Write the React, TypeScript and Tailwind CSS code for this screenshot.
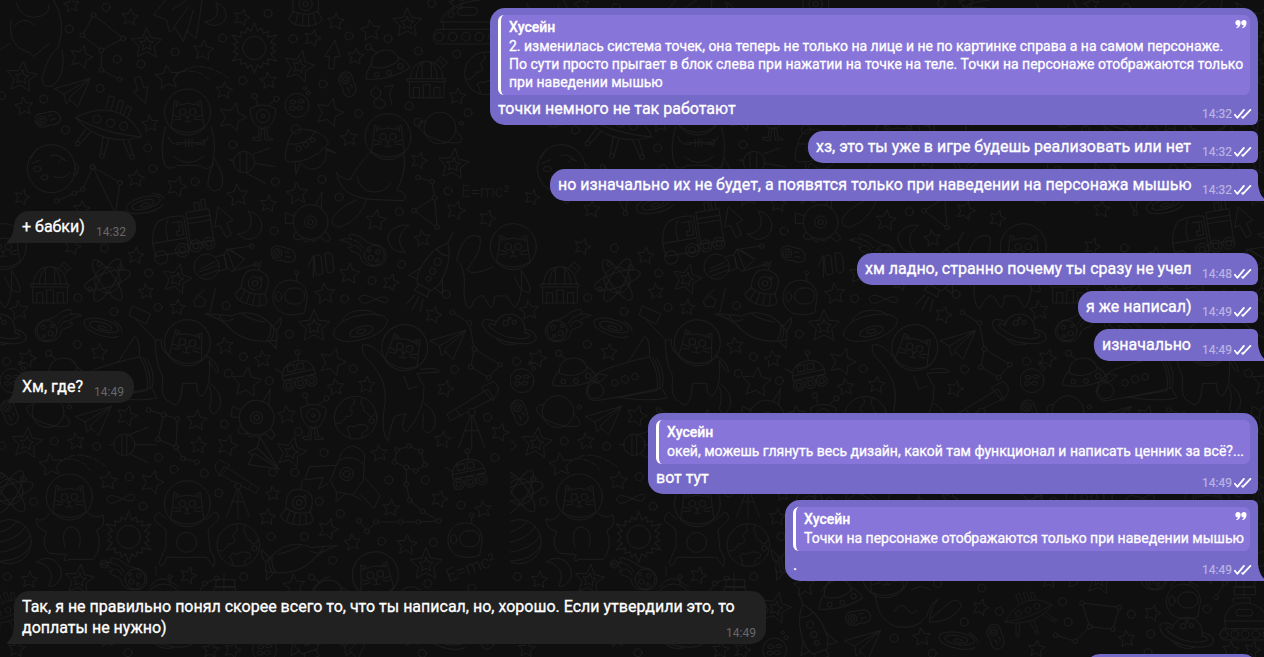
import clsx from "clsx";
import { ReactNode } from "react";

interface BubbleProps {
  time: string;
  className?: string;
  isOwn?: boolean;
  isLast?: boolean; // last message of a group has a tail
  children?: ReactNode;
}

interface QuoteProps {
  author: string;
  hasIcon?: boolean;
  children: ReactNode;
}

// [x, y, radius], wallpaper units
const STARS = [
  [215, 15, 24], [390, 52, 26], [243, 172, 36], [72, 320, 28], [610, 152, 32],
  [725, 53, 26], [503, 233, 38], [672, 272, 26], [697, 352, 44], [450, 372, 26],
  [408, 536, 26], [530, 560, 32], [713, 587, 34], [805, 612, 26], [66, 592, 24],
  [805, 243, 26], [1007, 65, 26], [937, 115, 26], [1112, 92, 32], [1067, 170, 26],
  [988, 338, 44], [1047, 414, 26], [1372, 290, 26], [1257, 482, 26], [892, 582, 34],
  [1128, 662, 32], [1367, 632, 30], [1267, 716, 26], [1048, 822, 32], [1172, 848, 26],
  [975, 882, 32], [407, 768, 26], [217, 740, 26], [438, 875, 24], [245, 628, 26],
  [1462, 656, 26], [57, 932, 30], [532, 923, 24], [1300, 945, 26], [675, 1038, 26],
  [297, 1057, 26], [82, 1075, 28], [788, 1078, 26], [740, 1148, 46], [997, 1086, 42],
  [1007, 1162, 26], [1100, 1155, 26], [1335, 1167, 26], [860, 1245, 28], [590, 1262, 32],
  [380, 1248, 32], [228, 1325, 26], [596, 1337, 26], [682, 1337, 32], [1138, 1360, 26],
  [1328, 1320, 26], [1500, 1298, 28], [152, 1395, 36], [325, 1443, 28], [456, 1447, 36],
  [818, 1482, 22], [802, 1552, 26], [984, 1588, 32], [1057, 1628, 26], [1173, 1525, 26],
  [1318, 1497, 26], [1450, 1528, 26], [1220, 1635, 32], [565, 1727, 26], [883, 1758, 34],
  [88, 1740, 26], [1412, 1823, 26], [1235, 1912, 28], [50, 1947, 26], [397, 1839, 26],
  [320, 1917, 26], [632, 1950, 26], [697, 1950, 26], [1370, 10, 24],
];

const BIG_STARS = [
  [440, 132, 48], [65, 232, 48], [897, 200, 48], [1222, 70, 46], [1360, 494, 48],
  [530, 838, 46], [942, 980, 50], [80, 1330, 48], [873, 1357, 48], [1278, 1694, 50],
  [238, 1740, 46], [797, 1825, 48],
];

const DOTS = [
  [318, 22], [208, 87], [351, 178], [525, 156], [423, 192], [300, 265], [131, 297],
  [197, 390], [443, 444], [459, 506], [585, 545], [699, 434], [826, 545], [728, 242],
  [668, 114], [804, 40], [879, 116], [1047, 108], [1164, 116], [1255, 153], [1370, 162],
  [969, 252], [1076, 340], [1227, 318], [1254, 367], [1404, 338], [966, 538], [1017, 592],
  [1198, 635], [1344, 573], [822, 693], [446, 819], [313, 744], [1205, 793], [1116, 842],
  [1338, 883], [1295, 10], [233, 893], [5, 287], [342, 935], [474, 922], [679, 917],
  [1034, 896], [232, 1033], [868, 1002], [730, 1070], [685, 1120], [808, 1142], [20, 1084],
  [1060, 1106], [1364, 1108], [673, 1272], [895, 1295], [163, 1323], [290, 1339],
  [476, 1372], [522, 1408], [613, 1420], [388, 1430], [818, 1417], [884, 1417],
  [972, 1358], [1167, 1440], [1276, 1440], [1383, 1515], [101, 1505], [429, 1519],
  [656, 1479], [958, 1504], [1021, 1541], [813, 1610], [913, 1610], [998, 1681],
  [1145, 1624], [1300, 1627], [313, 1692], [731, 1730], [1283, 1751], [22, 1730],
  [1463, 1252], [1485, 1373], [5, 1337], [1415, 1764], [1363, 1866], [128, 1805],
  [144, 1866], [1468, 1834], [1152, 1915], [334, 1843], [561, 1827], [392, 1902],
  [1267, 1960], [384, 1958],
];

const starPath = (x: number, y: number, r: number, turn: number) => {
  const points = Array.from({ length: 10 }, (_, i) => {
    const radius = i % 2 ? r * 0.48 : r;
    const angle = (i * Math.PI) / 5 - Math.PI / 2 + turn;
    return `${(x + radius * Math.cos(angle)).toFixed(1)} ${(y + radius * Math.sin(angle)).toFixed(1)}`;
  });
  return `M${points.join("L")}Z`;
};

const Chain = ({ points }: { points: number[][] }) => (
  <>
    <path d={`M${points.map((p) => p.join(" ")).join("L")}`} />
    {points.map(([x, y], i) => (
      <circle key={i} cx={x} cy={y} r="7" fill="#0f0f0f" />
    ))}
  </>
);

const CatHead = ({ x, y, turn = 0 }: { x: number; y: number; turn?: number }) => (
  <g transform={`translate(${x} ${y}) rotate(${turn})`}>
    <circle r="69" />
    <path d="M-50 46Q-44 10 -42 -12L-40 -34Q-28 -32 -20 -22Q0 -30 20 -22Q28 -32 40 -34L42 -12Q44 10 50 46" />
    <path d="M-34 -16L-34 -26L-25 -20M34 -16L34 -26L25 -20" />
    <circle cx="-15" cy="0" r="10" />
    <circle cx="15" cy="0" r="10" />
    <path d="M-5 13H5L0 19ZM0 19V27M-10 28Q-4 34 0 27Q4 34 10 28M-20 16L-42 10M-20 22L-40 24M20 16L42 10M20 22L40 24" />
    <path d="M-50 46Q0 78 50 46" />
  </g>
);

const Sun = ({ x, y }: { x: number; y: number }) => (
  <g transform={`translate(${x} ${y})`}>
    <circle r="35" />
    {Array.from({ length: 18 }, (_, i) => (
      <path
        key={i}
        d={i % 3 ? "M-9 -51L0 -64L9 -51" : "M-9 -51L0 -78L9 -51"}
        transform={`rotate(${i * 20})`}
      />
    ))}
  </g>
);

const Plane = ({ x, y, turn = 0 }: { x: number; y: number; turn?: number }) => (
  <path
    transform={`translate(${x} ${y}) rotate(${turn})`}
    d="M55 -45L-53 -14L-24 2L55 -45L17 42L-10 15L55 -45M-24 2L-18 32L-4 20"
  />
);

const Galaxy = ({ x, y, turn }: { x: number; y: number; turn: number }) => (
  <g transform={`translate(${x} ${y}) rotate(${turn})`}>
    <path d="M52 18C20 36 -58 22 -58 -4C-58 -30 46 -28 48 -2C48 20 -40 18 -40 -2C-38 -18 28 -16 28 0C26 12 -18 8 -14 0Q0 -7 12 1" />
    <path d="M60 2C56 -10 44 -20 30 -25" />
  </g>
);

const Comet = ({ x, y, flip = false }: { x: number; y: number; flip?: boolean }) => (
  <g transform={`translate(${x} ${y})${flip ? " scale(-1 1)" : ""}`}>
    <path d="M-18 -28Q-40 -20 -41 6Q-36 36 -2 35Q30 32 36 10Q34 0 52 -6Q68 -8 72 -22Q60 -20 62 -28Q76 -40 100 -44Q80 -52 62 -46Q76 -56 66 -62Q40 -58 30 -48Q16 -34 -18 -28Z" />
    <circle cx="-5" cy="2" r="30" />
    <circle cx="-16" cy="-8" r="7" />
    <circle cx="6" cy="10" r="8" />
    <circle cx="-14" cy="18" r="5" />
    <circle cx="10" cy="-12" r="5" />
    <path d="M34 -10Q40 -26 56 -28M28 -20Q40 -40 58 -44" />
  </g>
);

const Saturn = ({ x, y }: { x: number; y: number }) => (
  <g transform={`translate(${x} ${y}) rotate(14)`}>
    <path d="M-46 -4A46 46 0 0 1 46 -4M-30 34Q0 52 30 34" />
    <path d="M-46 -16Q-86 -22 -84 -2Q-70 32 0 34Q76 32 84 4Q82 -16 46 -16" />
    <path d="M-46 -6Q-66 -10 -64 0Q-40 18 0 20Q50 18 64 2Q62 -8 46 -6" />
    <circle cx="-16" cy="-20" r="8" />
    <circle cx="8" cy="-28" r="6" />
    <circle cx="-8" cy="-36" r="4" />
  </g>
);

const RingedPlanet = ({ x, y }: { x: number; y: number }) => (
  <g transform={`translate(${x} ${y})`}>
    <circle r="48" />
    <path d="M-44 -22Q-70 -20 -62 0C-40 36 40 52 62 42Q72 30 50 10" />
    <circle cx="64" cy="-14" r="6" />
  </g>
);

const Asteroid = ({ x, y, turn }: { x: number; y: number; turn: number }) => (
  <g transform={`translate(${x} ${y}) rotate(${turn})`}>
    <path d="M-36 -8Q-30 -30 -6 -22Q10 -20 26 -16Q44 -4 36 16Q24 28 0 18Q-34 24 -36 -8Z" />
    <circle cx="-16" cy="-2" r="13" />
    <circle cx="-16" cy="-2" r="6" />
    <path d="M6 -6Q12 -12 18 -6M8 8Q16 2 24 8" />
  </g>
);

const Crater = ({ x, y }: { x: number; y: number }) => (
  <g transform={`translate(${x} ${y})`}>
    <circle r="36" />
    <ellipse cx="-12" cy="-10" rx="9" ry="6" />
    <ellipse cx="12" cy="-12" rx="9" ry="5" />
    <ellipse cx="-14" cy="9" rx="9" ry="6" />
    <ellipse cx="8" cy="8" rx="9" ry="6" />
    <circle cx="24" cy="-52" r="5" />
    <circle cx="34" cy="-37" r="6" />
  </g>
);

const Earth = ({ x, y }: { x: number; y: number }) => (
  <g transform={`translate(${x} ${y})`}>
    <circle r="64" />
    <path d="M-60 16Q-46 22 -40 10Q-30 8 -30 -4Q-12 0 -10 -16Q-24 -30 -8 -38Q0 -44 -6 -58M20 -58Q10 -40 24 -32Q20 -16 36 -14Q40 2 54 -6L60 -18" />
    <path d="M-26 34Q-20 20 -6 28Q10 16 24 22Q44 24 34 38Q20 40 18 56M-26 34Q-18 44 -16 60" />
    <circle cx="48" cy="10" r="8" />
  </g>
);

const Alien = ({ x, y }: { x: number; y: number }) => (
  <g transform={`translate(${x} ${y})`}>
    <path d="M-38 -22Q0 -44 38 -22Q40 10 16 34Q0 44 -16 34Q-40 10 -38 -22Z" />
    <circle r="20" />
    <circle r="5" />
    <path d="M-10 32Q0 44 8 32M-12 40L-14 64H-32Q-34 74 -8 74L-4 42M12 40L14 64Q32 66 30 72H6L4 42" />
    <path d="M-16 -34L-22 -52M18 -34L34 -46" />
    <circle cx="-25" cy="-60" r="8" />
    <circle cx="40" cy="-51" r="8" />
  </g>
);

const Observatory = ({ x, y }: { x: number; y: number }) => (
  <g transform={`translate(${x} ${y})`}>
    <path d="M-50 -6Q-46 -58 0 -58Q46 -58 50 -6M-32 -6Q-30 -50 -8 -56M-14 -6V-54M14 -6V-54M32 -6Q30 -50 8 -56" />
    <rect x="-57" y="-6" width="114" height="9" />
    <path d="M-52 3V51H52V3M-40 51V20H-22V51M-10 51V12H10V51M22 51V20H40V51M24 -52L42 -72L62 -54L46 -38M34 -64L52 -46" />
  </g>
);

const Saucer = ({ x, y, turn = 0 }: { x: number; y: number; turn?: number }) => (
  <g transform={`translate(${x} ${y}) rotate(${turn})`}>
    <path d="M-42 0Q-40 -38 0 -40Q40 -38 42 0Q0 24 -42 0Z" />
    <path d="M-42 -8Q-62 8 -68 32Q0 54 68 32Q62 8 42 -8M-16 -38L-30 -54" />
    <circle cx="-36" cy="-60" r="9" />
    <circle cx="-34" cy="26" r="7" />
    <circle cx="4" cy="30" r="7" />
    <circle cx="42" cy="20" r="8" />
  </g>
);

const LegShip = ({ x, y, turn }: { x: number; y: number; turn: number }) => (
  <g transform={`translate(${x} ${y}) rotate(${turn})`}>
    <path d="M-104 0Q-50 -52 6 -50Q60 -50 104 0Q50 32 0 32Q-50 32 -104 0ZM-104 0Q0 22 104 0" />
    <circle cx="-40" cy="-14" r="12" />
    <circle cx="2" cy="-14" r="12" />
    <circle cx="42" cy="-16" r="12" />
    <path d="M-64 22L-80 66M-48 28L-68 70M-8 32L-2 82M10 32L10 82M52 26L84 66M68 20L94 60M-24 -54V-92H-8V-54M8 -54V-88H22V-52M32 -48L36 -78L50 -74L46 -44" />
    <circle cx="-76" cy="72" r="7" />
    <circle cx="4" cy="88" r="7" />
    <circle cx="92" cy="66" r="7" />
  </g>
);

const PodShip = ({ x, y, turn = 0 }: { x: number; y: number; turn?: number }) => (
  <g transform={`translate(${x} ${y}) rotate(${turn})`}>
    <circle r="52" />
    <circle r="18" />
    <circle r="8" />
    <path d="M-50 -18L-76 -28V4L-52 4M14 -50L34 -90L32 -40M-44 30Q-60 44 -44 52Q-30 56 -26 46Q-16 70 0 52Q14 68 26 44L50 60L60 48L44 28" />
  </g>
);

const Rover = ({ x, y }: { x: number; y: number }) => (
  <g transform={`translate(${x} ${y}) rotate(-12)`}>
    <path d="M-50 14Q-50 -34 0 -36Q50 -34 50 14ZM-48 0H48M-30 -8V-26H-8V-8ZM0 -8V-26H20V-8ZM8 -36V-54M-46 -8L-66 -26" />
    <circle cx="10" cy="-60" r="7" />
    <circle cx="-36" cy="32" r="16" />
    <circle cx="0" cy="32" r="16" />
    <circle cx="34" cy="32" r="16" />
    <circle cx="-36" cy="32" r="8" />
    <circle cx="0" cy="32" r="8" />
    <circle cx="34" cy="32" r="8" />
  </g>
);

const DomeAlien = ({ x, y, turn = 0 }: { x: number; y: number; turn?: number }) => (
  <g transform={`translate(${x} ${y}) rotate(${turn})`}>
    <path d="M-36 22Q-50 -44 0 -44Q50 -44 36 22M-36 18Q0 36 36 18L50 42Q40 62 0 62Q-40 62 -50 42ZM-24 26L-30 56M-8 30L-10 62M8 30L10 62M24 26L30 56M0 -44V-74" />
    <circle cy="-4" r="20" />
    <circle cy="-4" r="8" />
    <circle cx="14" cy="-24" r="4" />
  </g>
);

const Helmet = ({ x, y }: { x: number; y: number }) => (
  <g transform={`translate(${x} ${y})`}>
    <path d="M-36 42Q-56 20 -50 -8Q-40 -46 0 -48Q46 -46 52 0L44 50Q10 62 -20 52Z" />
    <rect x="-16" y="-24" width="60" height="48" rx="24" />
    <ellipse cx="-34" cy="2" rx="9" ry="14" />
    <path d="M20 -46V-64" />
    <circle cx="20" cy="-70" r="6" />
  </g>
);

const Telescope = ({ x, y, flip = false }: { x: number; y: number; flip?: boolean }) => (
  <g transform={`translate(${x} ${y})${flip ? " scale(-1 1)" : ""}`}>
    <path d="M-74 8L-64 26L66 -42L50 -68ZM-46 -6L-34 12M30 -74L64 -92Q86 -80 78 -56L64 -34ZM-4 12L-40 108M0 12V114M4 12L40 108M-22 56H22" />
    <circle r="11" fill="#0f0f0f" />
  </g>
);

const Rocket = ({ x, y, turn }: { x: number; y: number; turn: number }) => (
  <g transform={`translate(${x} ${y}) rotate(${turn})`}>
    <path d="M0 -92Q-40 -50 -36 30L-24 58H24L36 30Q40 -50 0 -92ZM0 -92V-130M-22 -60Q0 -48 22 -60M-36 10L-58 50L-28 46M36 10L58 50L28 46M-18 58L-22 80H22L18 58M-14 92L-24 130M0 92V136M14 92L24 130" />
    <circle cy="-28" r="11" />
    <circle cy="4" r="9" />
    <circle cy="30" r="7" />
  </g>
);

const Shuttle = ({ x, y }: { x: number; y: number }) => (
  <g transform={`translate(${x} ${y})`}>
    <path d="M-116 42Q-110 0 -60 -22Q0 -44 74 -60Q104 -10 96 42L-84 72Q-116 72 -116 42ZM10 -44Q30 -76 58 -120Q74 -122 74 -60M-20 62L110 34L126 64Q80 76 -20 62M84 -58Q112 -10 104 36M96 -54Q122 -12 112 30M-104 12L-80 -8L-52 -4L-74 14Z" />
    <circle cx="-30" cy="18" r="10" />
    <circle cx="0" cy="8" r="11" />
    <circle cx="30" cy="0" r="10" />
    <circle cx="-88" cy="42" r="24" />
  </g>
);

const Truck = ({ x, y }: { x: number; y: number }) => (
  <g transform={`translate(${x} ${y}) rotate(-9)`}>
    <path d="M-86 56Q-100 -10 -64 -46Q-30 -58 14 -50V56ZM-92 16H10M-44 16Q-50 -30 -34 -46M-24 -36H6V4L-14 6V-8H-4V-34M22 -60H92V36H22ZM22 -40H92M22 -26H92M50 -60V-84H64V-60M72 -60V-90H84V-60" />
    <circle cx="-72" cy="62" r="20" />
    <circle cx="-6" cy="50" r="20" />
    <circle cx="36" cy="44" r="18" />
    <circle cx="76" cy="42" r="18" />
    <circle cx="-6" cy="50" r="10" />
    <circle cx="36" cy="44" r="9" />
    <circle cx="76" cy="42" r="9" />
  </g>
);

const Atom = ({ x, y }: { x: number; y: number }) => (
  <g transform={`translate(${x} ${y})`}>
    <circle r="39" />
    <ellipse rx="72" ry="22" transform="rotate(-18)" />
    <ellipse rx="72" ry="22" transform="rotate(55)" />
    <ellipse rx="72" ry="22" transform="rotate(120)" />
    <circle cx="40" cy="-38" r="8" />
    <circle cx="-52" cy="28" r="7" />
    <circle cx="-24" cy="-48" r="7" />
  </g>
);

const SpacePlane = ({ x, y, flip = false }: { x: number; y: number; flip?: boolean }) => (
  <g transform={`translate(${x} ${y})${flip ? " scale(-1 1)" : ""} rotate(14)`}>
    <path d="M-128 -8Q-80 -18 -50 -20Q-20 -48 30 -42Q70 -30 92 -10L100 16Q20 52 -40 20Q-70 -4 -128 -8ZM-86 -14Q-70 12 -44 -12M-20 -34Q0 -24 50 -26M78 -20L96 -52Q104 -30 92 -10M78 26L104 42L96 14M70 -24Q80 0 72 26M80 -18Q90 0 82 20" />
  </g>
);

const Wallpaper = () => (
  <svg
    className="absolute inset-0 h-full w-full"
    fill="none"
    stroke="#1c1c1c"
    strokeWidth="3"
    strokeLinecap="round"
    strokeLinejoin="round"
    aria-hidden
  >
    <defs>
      <pattern
        id="space"
        width="510"
        height="657"
        patternUnits="userSpaceOnUse"
        viewBox="0 0 1530 1971"
      >
        {STARS.map(([x, y, r], i) => (
          <path key={i} d={starPath(x, y, r, (i % 3) * 0.2 - 0.1)} />
        ))}
        {BIG_STARS.map(([x, y, r], i) => (
          <path
            key={i}
            d={starPath(x, y, r, (i % 3) * 0.12) + starPath(x, y, r * 0.45, (i % 3) * 0.12)}
          />
        ))}
        {DOTS.map(([x, y]) => (
          <circle key={`${x}-${y}`} cx={x} cy={y} r="12" />
        ))}

        <Chain points={[[370, 115], [281, 45], [247, 106], [304, 151], [370, 115]]} />
        <Chain points={[[304, 151], [304, 210], [359, 238]]} />
        <Chain points={[[170, 603], [223, 580], [248, 568], [278, 501], [360, 548], [346, 640], [278, 501]]} />
        <Chain points={[[1254, 532], [1296, 545], [1304, 593], [1242, 632], [1311, 682], [1304, 593]]} />
        <Chain points={[[1357, 937], [1408, 969], [1423, 1047], [1412, 1101], [1466, 1133], [1500, 1094], [1423, 1047]]} />
        <Chain points={[[446, 1230], [491, 1244], [532, 1257], [528, 1341], [474, 1318], [491, 1244]]} />
        <Chain points={[[528, 1341], [549, 1376], [591, 1386]]} />
        <Chain points={[[1219, 1453], [1219, 1402], [1183, 1386], [1191, 1350], [1227, 1338], [1262, 1354], [1275, 1394], [1247, 1413], [1219, 1402]]} />
        <Chain points={[[1219, 1453], [1229, 1501], [1268, 1534], [1317, 1563], [1255, 1566], [1201, 1566], [1128, 1566], [1101, 1594], [1077, 1562]]} />
        <Chain points={[[107, 1905], [166, 1924], [209, 1880], [186, 1809], [298, 1822], [279, 1888], [209, 1880]]} />
        <Chain points={[[588, 1792], [614, 1750], [650, 1735]]} />

        <Sun x={763} y={144} />
        <Sun x={386} y={1611} />
        <Plane x={216} y={280} />
        <Plane x={279} y={1264} />
        <Plane x={780} y={1366} turn={75} />
        <Plane x={1342} y={1036} />
        <Plane x={1057} y={1936} />
        <Galaxy x={435} y={613} turn={-18} />
        <Galaxy x={308} y={981} turn={12} />
        <Galaxy x={1345} y={1920} turn={6} />
        <Comet x={146} y={990} />
        <Comet x={1118} y={764} flip />
        <Comet x={400} y={1735} flip />
        <Saturn x={500} y={1902} />
        <Saturn x={-2} y={992} />
        <Saturn x={1528} y={992} />
        <RingedPlanet x={1320} y={384} />
        <RingedPlanet x={144} y={1235} />
        <Asteroid x={142} y={358} turn={-20} />
        <Asteroid x={1042} y={252} turn={60} />
        <Asteroid x={848} y={763} turn={5} />
        <Asteroid x={28} y={1236} turn={60} />
        <Asteroid x={1043} y={1853} turn={-20} />
        <Asteroid x={1456} y={1909} turn={60} />
        <Crater x={891} y={316} />
        <Crater x={36} y={1142} />
        <Crater x={794} y={1950} />
        <Earth x={1067} y={1253} />
        <Earth x={715} y={1635} />
        <Earth x={1458} y={220} />
        <Alien x={789} y={348} />
        <Alien x={940} y={1246} />
        <Observatory x={1280} y={242} />
        <Observatory x={150} y={858} />
        <Saucer x={1156} y={190} turn={-15} />
        <Saucer x={190} y={1114} turn={-8} />
        <Saucer x={985} y={1780} turn={-15} />
        <LegShip x={326} y={382} turn={16} />
        <g transform="translate(1556 1840) scale(.72)">
          <LegShip x={0} y={0} turn={-20} />
        </g>
        <g transform="translate(26 1840) scale(.72)">
          <LegShip x={0} y={0} turn={-20} />
        </g>
        <PodShip x={932} y={666} />
        <PodShip x={770} y={1253} turn={5} />
        <Rover x={895} y={1118} />
        <Rover x={1405} y={1414} />
        <DomeAlien x={764} y={854} turn={15} />
        <DomeAlien x={917} y={16} />
        <DomeAlien x={897} y={1512} turn={8} />
        <Helmet x={870} y={888} />
        <Helmet x={1395} y={1616} />
        <Helmet x={490} y={1800} />
        <Telescope x={1415} y={1236} />
        <g transform="translate(714 1458) scale(.85)">
          <Telescope x={0} y={0} flip />
        </g>
        <Rocket x={1300} y={810} turn={28} />
        <Rocket x={910} y={1900} turn={-20} />
        <Shuttle x={345} y={1130} />
        <Truck x={545} y={700} />
        <Atom x={322} y={840} />
        <Atom x={30} y={1475} />
        <SpacePlane x={738} y={980} />
        <SpacePlane x={890} y={1675} flip />

        {/* cat hugging a fish bone */}
        <CatHead x={563} y={336} />
        <path d="M497 380Q476 450 496 500Q520 510 530 496H600Q620 516 636 496Q652 440 634 380M640 472Q680 530 664 562Q644 586 624 558Q622 530 640 490M504 410Q514 440 546 432M624 410Q614 440 586 432M522 470Q565 506 610 470M530 428H600M556 418V440M566 416V440M576 418V440M600 428L612 418V438Z" />
        {/* sitting cat */}
        <CatHead x={1164} y={410} />
        <path d="M1112 456Q1070 500 1050 540Q1010 530 1010 518M1010 518Q1020 590 1110 598L1210 602Q1230 580 1190 570Q1220 520 1212 460M1070 526Q1080 576 1120 576Q1160 576 1172 548M1100 598Q1080 660 1020 682Q990 680 998 654Q1020 620 1070 600" />
        {/* floating cats */}
        <CatHead x={562} y={1028} turn={8} />
        <path d="M508 1070Q480 1050 484 1020L466 1020Q466 1090 488 1130Q480 1200 508 1204Q540 1240 548 1150H590Q590 1190 608 1188Q634 1160 628 1080Q650 1126 656 1114Q650 1080 614 1066M630 1150Q670 1180 660 1220Q640 1260 628 1226Q640 1190 628 1160M466 1020L410 960M398 918L452 942L438 972L388 946Z" />
        <CatHead x={1214} y={1043} turn={14} />
        <path d="M1148 1070Q1120 1030 1088 1034Q1080 1060 1110 1084Q1160 1140 1156 1200Q1140 1300 1164 1322Q1176 1260 1186 1248L1218 1240Q1196 1290 1220 1296Q1276 1230 1272 1160L1250 1120L1318 1116Q1314 1100 1262 1108M1272 1210Q1310 1230 1306 1274Q1290 1316 1268 1286L1270 1240M1212 1128L1226 1168L1252 1158" />
        <CatHead x={208} y={1491} />
        <path d="M150 1540Q128 1570 108 1556Q110 1590 140 1594Q120 1640 150 1660L200 1664Q180 1690 210 1678H280Q310 1640 290 1590Q320 1580 308 1544Q290 1560 264 1540M194 1640Q180 1582 216 1580Q250 1590 238 1640" />
        <CatHead x={562} y={1511} />
        <path d="M500 1558L476 1536Q460 1550 464 1562L498 1590V1640L476 1690Q488 1712 500 1672H620L640 1700Q652 1680 630 1650L624 1590L656 1556Q654 1530 640 1540L618 1560" />
        <circle cx="560" cy="1627" r="30" />
        <CatHead x={1126} y={1724} turn={-8} />
        <path d="M1096 1780Q1100 1860 1160 1880Q1220 1890 1250 1850Q1260 1810 1284 1798Q1262 1820 1258 1866Q1320 1870 1354 1820Q1350 1790 1320 1806L1262 1856M1152 1836Q1170 1800 1194 1828Q1200 1850 1220 1832M1206 1770Q1230 1750 1262 1770" />
        {/* cat on the left edge and the walking one behind it */}
        <path d="M50 10Q60 50 100 52Q150 50 146 14M34 60Q20 140 90 158L100 170L148 130M44 78Q70 44 104 76M160 0Q200 60 176 140Q140 170 126 236Q130 270 160 256Q200 220 186 150M30 130L0 150" />
        {[0, -1530].map((shift) => (
          <g key={shift} transform={`translate(${shift} 0)`}>
            <CatHead x={1540} y={740} />
            <path d="M1480 800Q1420 830 1400 810Q1450 750 1440 710Q1390 690 1370 780Q1400 800 1392 880Q1396 930 1412 924Q1430 880 1450 888L1470 920Q1480 930 1484 888H1520L1544 924Q1570 900 1564 810Q1600 870 1588 876Q1560 880 1544 830" />
          </g>
        ))}

        {/* striped planet, moons and small bits */}
        <circle cx="28" cy="1625" r="66" />
        <path d="M-30 1600Q20 1600 50 1566M-30 1630Q50 1626 76 1580M-20 1660Q70 1650 90 1606M0 1684Q70 1680 92 1636" />
        <circle cx="154" cy="506" r="72" />
        <path d="M92 476L110 446M96 490L120 480M152 468Q170 456 200 484L184 476L176 488M160 530Q190 540 208 520M226 490L236 500L230 526L220 522" />
        <ellipse cx="112" cy="507" rx="12" ry="8" />
        <ellipse cx="134" cy="532" rx="10" ry="8" />
        <path d="M648 8C690 20 690 80 634 76L614 66C650 60 660 40 648 8ZM746 634C800 640 800 720 738 718L712 702C748 700 764 676 746 634ZM1226 676C1190 670 1150 700 1168 730Q1180 760 1216 756C1190 730 1194 700 1226 676ZM110 1686C160 1650 200 1710 178 1740Q164 1764 146 1758C166 1720 144 1690 110 1686Z" />
        <path d="M404 234L420 228L432 264L444 258L436 310L400 276L412 272ZM1004 122L974 170L988 168L986 206H1002L1004 170H1020ZM654 622L644 682L660 676L678 712L694 704L680 670L698 660Z" />
        <path d="M526 226Q600 170 684 234M540 216Q600 204 628 242M184 1384Q240 1340 320 1400M194 1376Q250 1376 268 1410" strokeDasharray="18 8" />
        <path d="M498 0L460 44L500 60L508 96L526 84L550 124L560 92L588 116Q600 50 606 0M516 30L560 0M520 84L566 20M560 100L580 30" />
        <path d="M320 1498C330 1460 400 1530 404 1490C396 1460 330 1540 320 1498ZM1078 896C1088 860 1160 930 1164 900C1150 866 1084 940 1078 896Z" />
        <circle cx="732" cy="486" r="32" />
        <path d="M720 458V516M740 456V518M688 480L702 484M760 462L810 444M764 490L826 500M738 518L796 550M690 480H700" />
        <circle cx="373" cy="1334" r="32" />
        <path d="M366 1304V1366M380 1304V1366M328 1334H342M388 1304L444 1282M404 1334H468M390 1362L444 1388" />
        <circle cx="620" cy="800" r="38" />
        <path d="M602 806L644 786M598 816L652 796M604 828L654 810M648 770L672 764L680 806L656 814M680 748L672 764L682 804L696 814L734 778ZM684 748L754 738M696 814L768 792M680 748L704 808M694 750L734 778" />
        <circle cx="755" cy="738" r="7" />
        <circle cx="768" cy="792" r="7" />
        <path d="M856 466Q866 380 910 388Q960 390 980 418Q990 430 976 440Q930 488 870 486Q852 486 856 466ZM864 432Q920 440 948 392M886 490L888 524L900 490M904 490Q930 520 960 500Q984 480 978 444L1008 460L980 450" />
        <circle cx="888" cy="388" r="14" />
        <circle cx="896" cy="446" r="8" />
        <circle cx="918" cy="434" r="8" />
        <circle cx="938" cy="420" r="7" />
        <path d="M1322 66Q1340 10 1440 0M1322 66H1530M1330 66V88M1310 88H1530M1310 132H1530M1310 88Q1288 110 1310 132" />
        <rect x="1372" y="22" width="60" height="24" rx="12" />
        <circle cx="1353" cy="44" r="9" />
        <circle cx="1318" cy="110" r="13" />
        <circle cx="1358" cy="110" r="13" />
        <circle cx="1398" cy="110" r="13" />
        <circle cx="1438" cy="110" r="13" />
        <circle cx="1478" cy="110" r="13" />
        <path d="M612 1862Q620 1810 672 1808Q730 1810 744 1862ZM616 1862V1886H740V1862M610 1886H740Q760 1902 740 1920H610Q590 1902 610 1886ZM640 1808V1794H690V1808M672 1794V1720M644 1760H706V1784H644Z" />
        <rect x="648" y="1828" width="50" height="20" rx="10" />
        <circle cx="612" cy="1903" r="12" />
        <circle cx="644" cy="1903" r="12" />
        <circle cx="676" cy="1903" r="12" />
        <circle cx="708" cy="1903" r="12" />
        <circle cx="738" cy="1903" r="10" />
        <path d="M1000 1006Q1000 970 1060 950Q1150 930 1162 962Q1160 990 1110 1012Q1020 1040 1000 1006ZM1026 966Q1030 940 1070 932Q1120 926 1134 948" />
        <ellipse cx="1084" cy="994" rx="36" ry="14" transform="rotate(-16 1084 994)" />
        <ellipse cx="1084" cy="994" rx="14" ry="6" transform="rotate(-16 1084 994)" />
        <path d="M992 1440L1026 1354Q1060 1320 1094 1360L1090 1440L1060 1484L1010 1476ZM1020 1380Q1060 1360 1092 1394M1010 1396L928 1400L914 1440L970 1432M1092 1430L1140 1486L1122 1526L1080 1480M968 1436L956 1466L984 1450M1010 1480L1008 1504L1034 1484M1060 1486L1084 1500" />
        <circle cx="1040" cy="1422" r="20" />
        <circle cx="1040" cy="1422" r="10" />
        <path d="M1114 270L1128 262L1142 272V286L1128 296L1114 286ZM1128 298L1142 296L1156 306V318L1140 326L1122 318V304ZM1154 260L1180 256L1168 280L1176 316M586 892L614 868M600 888L618 900L612 920H586L580 904ZM646 866L630 936M924 800L940 766V832M944 770Q960 756 964 776L968 820Q950 832 946 816ZM976 760Q996 752 998 776L1002 810Q984 828 980 810Z" />
        <path d="M990 1730Q950 1740 934 1776M450 1760Q470 1730 500 1738L536 1760M468 1700V1726M648 1740V1762H704V1740Z" />
        <g fontFamily="Roboto, sans-serif" fontWeight="300" fill="#1c1c1c" stroke="none">
          <text transform="translate(1346 1746) rotate(-20)" fontSize="54">
            E=mc²
          </text>
          <text x="1384" y="592" fontSize="50">
            E=mc²
          </text>
        </g>
      </pattern>
    </defs>
    <rect width="100%" height="100%" fill="url(#space)" stroke="none" />
  </svg>
);

const Ticks = () => (
  <svg width="18" height="10" viewBox="0 0 18 10" fill="none" stroke="#fff" strokeWidth="1.8">
    <path d="M.9 5.800L3.300 8.800L9.900 .9M8.200 8.100L8.900 8.900L16.400 .9" strokeLinecap="round" strokeLinejoin="round" />
  </svg>
);

const Tail = ({ isOwn }: { isOwn: boolean }) => (
  <svg
    width="9"
    height="17"
    viewBox="0 0 9 17"
    className={clsx(
      "absolute bottom-0",
      isOwn ? "-right-[9px] fill-[#766ac8]" : "-left-[9px] fill-[#212121]",
    )}
  >
    <path
      d={
        isOwn
          ? "M6 17H0V0c.193 2.84.876 5.767 2.05 8.782.904 2.325 2.446 4.485 4.625 6.48A1 1 0 016 17z"
          : "M3 17h6V0c-.193 2.84-.876 5.767-2.05 8.782-.904 2.325-2.446 4.485-4.625 6.48A1 1 0 003 17z"
      }
    />
  </svg>
);

const Bubble = ({ time, className, isOwn = false, isLast = false, children }: BubbleProps) => (
  <div
    className={clsx(
      "relative shrink-0 px-2 pt-[5px] pb-1.5 text-[16px] leading-[21px] whitespace-nowrap text-white",
      isOwn ? "self-end bg-[#766ac8]" : "self-start bg-[#212121]",
      className,
    )}
  >
    <div className="[-webkit-text-stroke:0.3px_white]">{children}</div>
    <span
      className={clsx(
        "absolute bottom-[3px] flex items-center text-[12px] leading-[16px]",
        isOwn
          ? "right-1.5 gap-0.5 text-[#bab4e3] [-webkit-text-stroke:0.2px_#bab4e3]"
          : "right-2.5 text-[#686868]",
      )}
    >
      {time}
      {isOwn && <Ticks />}
    </span>
    {isLast && <Tail isOwn={isOwn} />}
  </div>
);

const Quote = ({ author, hasIcon = false, children }: QuoteProps) => (
  <div className="relative mt-0.5 mb-[3px] overflow-hidden rounded-md border-l-3 border-white bg-[#8875d9] pt-[3px] pb-1 pl-2 text-[14px] leading-[18px]">
    <p className="mb-px font-medium">{author}</p>
    {children}
    {hasIcon && (
      <svg className="absolute top-[5px] right-[3px] fill-white" width="12" height="9" viewBox="0 0 12 9">
        <path d="M3 0a2.600 2.600 0 0 1 2.600 2.700C5.600 5.500 4.200 7.500 1.700 8.300L1.200 7.400C2.300 6.800 2.800 6 2.900 5.200A2.600 2.600 0 0 1 3 0ZM8.900 0a2.600 2.600 0 0 1 2.600 2.700C11.500 5.500 10.100 7.500 7.600 8.300L7.100 7.400C8.200 6.800 8.700 6 8.800 5.200A2.600 2.600 0 0 1 8.900 0Z" />
      </svg>
    )}
  </div>
);

const Group = ({ children }: { children: ReactNode }) => (
  <div className="flex shrink-0 flex-col gap-1.5">{children}</div>
);

export default function App() {
  return (
    <div className="relative h-[657px] w-[1264px] overflow-hidden bg-[#0f0f0f] font-['Roboto',sans-serif]">
      <Wallpaper />
      <main className="relative flex h-full flex-col gap-2.5 overflow-hidden pt-2 pr-1.5 pl-3.5">
        <Group>
          <Bubble isOwn time="14:32" className="w-[768px] rounded-[15px] rounded-br-md">
            <Quote author="Хусейн" hasIcon>
              <p>2. изменилась система точек, она теперь не только на лице и не по картинке справа а на самом персонаже.</p>
              <p>По сути просто прыгает в блок слева при нажатии на точке на теле. Точки на персонаже отображаются только</p>
              <p>при наведении мышью</p>
            </Quote>
            <p>точки немного не так работают</p>
          </Bubble>
          <Bubble isOwn time="14:32" className="w-[450px] rounded-[15px] rounded-r-md">
            <p>хз, это ты уже в игре будешь реализовать или нет</p>
          </Bubble>
          <Bubble isOwn isLast time="14:32" className="w-[708px] rounded-[15px] rounded-tr-md rounded-br-none">
            <p>но изначально их не будет, а появятся только при наведении на персонажа мышью</p>
          </Bubble>
        </Group>

        <Group>
          <Bubble isLast time="14:32" className="w-[122px] rounded-[15px] rounded-bl-none">
            <p>+ бабки)</p>
          </Bubble>
        </Group>

        <Group>
          <Bubble isOwn time="14:48" className="w-[401px] rounded-[15px] rounded-br-md">
            <p>хм ладно, странно почему ты сразу не учел</p>
          </Bubble>
          <Bubble isOwn time="14:49" className="w-[180px] rounded-[15px] rounded-r-md">
            <p>я же написал)</p>
          </Bubble>
          <Bubble isOwn isLast time="14:49" className="w-[164px] rounded-[15px] rounded-tr-md rounded-br-none">
            <p>изначально</p>
          </Bubble>
        </Group>

        <Group>
          <Bubble isLast time="14:49" className="w-[120px] rounded-[15px] rounded-bl-none">
            <p>Хм, где?</p>
          </Bubble>
        </Group>

        <Group>
          <Bubble isOwn time="14:49" className="w-[610px] rounded-[15px] rounded-br-md">
            <Quote author="Хусейн">
              <p>окей, можешь глянуть весь дизайн, какой там функционал и написать ценник за всё?...</p>
            </Quote>
            <p>вот тут</p>
          </Bubble>
          <Bubble isOwn isLast time="14:49" className="w-[473px] rounded-[15px] rounded-tr-md rounded-br-none">
            <Quote author="Хусейн" hasIcon>
              <p>Точки на персонаже отображаются только при наведении мышью</p>
            </Quote>
            <p>.</p>
          </Bubble>
        </Group>

        <Group>
          <Bubble isLast time="14:49" className="w-[752px] rounded-[15px] rounded-bl-none">
            <p>Так, я не правильно понял скорее всего то, что ты написал, но, хорошо. Если утвердили это, то</p>
            <p>доплаты не нужно)</p>
          </Bubble>
        </Group>

        <Group>
          <div className="h-8 w-[173px] self-end rounded-[15px] bg-[#766ac8]" />
        </Group>
      </main>
    </div>
  );
}
